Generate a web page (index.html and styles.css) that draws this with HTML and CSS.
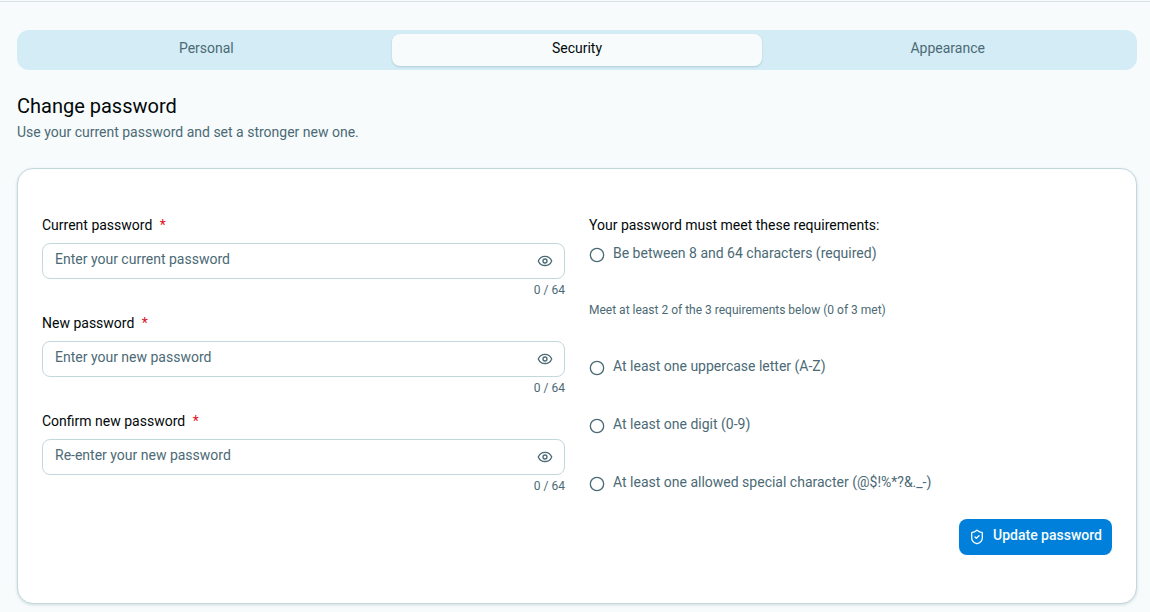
FILE: index.html
```html
<!DOCTYPE html>
<html lang="en">
<head>
  <meta charset="UTF-8" />
  <meta name="viewport" content="width=device-width, initial-scale=1.0"/>
  <title>Settings - Security</title>
  <link rel="stylesheet" href="styles.css">
</head>
<body>

  <main class="settings">

    <!-- Tabs -->
    <div class="tabs" role="tablist">
      <button type="button" class="tab" role="tab" aria-selected="false">Personal</button>
      <button type="button" class="tab active" role="tab" aria-selected="true">Security</button>
      <button type="button" class="tab" role="tab" aria-selected="false">Appearance</button>
    </div>

    <header class="heading">
      <h1>Change password</h1>
      <p>Use your current password and set a stronger new one.</p>
    </header>

    <form class="card">

      <!-- Password fields -->
      <div class="fields">
        <div class="field">
          <label for="currentPassword">Current password <span class="required">*</span></label>
          <div class="input-box">
            <input type="password" id="currentPassword" maxlength="64" placeholder="Enter your current password">
            <button type="button" class="toggle" aria-label="Show password">
              <svg viewBox="0 0 24 24"><path d="M2.1 12.3a1 1 0 0 1 0-.7 10.8 10.8 0 0 1 19.8 0 1 1 0 0 1 0 .7 10.8 10.8 0 0 1-19.8 0"/><circle cx="12" cy="12" r="3"/></svg>
            </button>
          </div>
          <span class="counter">0 / 64</span>
        </div>

        <div class="field">
          <label for="newPassword">New password <span class="required">*</span></label>
          <div class="input-box">
            <input type="password" id="newPassword" maxlength="64" placeholder="Enter your new password">
            <button type="button" class="toggle" aria-label="Show password">
              <svg viewBox="0 0 24 24"><path d="M2.1 12.3a1 1 0 0 1 0-.7 10.8 10.8 0 0 1 19.8 0 1 1 0 0 1 0 .7 10.8 10.8 0 0 1-19.8 0"/><circle cx="12" cy="12" r="3"/></svg>
            </button>
          </div>
          <span class="counter">0 / 64</span>
        </div>

        <div class="field">
          <label for="confirmPassword">Confirm new password <span class="required">*</span></label>
          <div class="input-box">
            <input type="password" id="confirmPassword" maxlength="64" placeholder="Re-enter your new password">
            <button type="button" class="toggle" aria-label="Show password">
              <svg viewBox="0 0 24 24"><path d="M2.1 12.3a1 1 0 0 1 0-.7 10.8 10.8 0 0 1 19.8 0 1 1 0 0 1 0 .7 10.8 10.8 0 0 1-19.8 0"/><circle cx="12" cy="12" r="3"/></svg>
            </button>
          </div>
          <span class="counter">0 / 64</span>
        </div>
      </div>

      <!-- Requirements -->
      <div class="rules">
        <h2>Your password must meet these requirements:</h2>
        <div class="rule">
          <svg viewBox="0 0 24 24"><circle cx="12" cy="12" r="10"/></svg>
          <span>Be between 8 and 64 characters (required)</span>
        </div>
        <p class="note">Meet at least 2 of the 3 requirements below (0 of 3 met)</p>
        <ul class="rule-list">
          <li class="rule">
            <svg viewBox="0 0 24 24"><circle cx="12" cy="12" r="10"/></svg>
            <span>At least one uppercase letter (A-Z)</span>
          </li>
          <li class="rule">
            <svg viewBox="0 0 24 24"><circle cx="12" cy="12" r="10"/></svg>
            <span>At least one digit (0-9)</span>
          </li>
          <li class="rule">
            <svg viewBox="0 0 24 24"><circle cx="12" cy="12" r="10"/></svg>
            <span>At least one allowed special character (@$!%*?&amp;._-)</span>
          </li>
        </ul>
      </div>

      <div class="actions">
        <button type="submit" class="submit">
          <svg viewBox="0 0 24 24"><path d="M20 13c0 5-3.500 7.500-7.660 8.950a1 1 0 0 1-.67-.01C7.500 20.500 4 18 4 13V6a1 1 0 0 1 1-1c2 0 4.500-1.200 6.240-2.720a1.170 1.170 0 0 1 1.520 0C14.510 3.810 17 5 19 5a1 1 0 0 1 1 1z"/><path d="m9 12 2 2 4-4"/></svg>
          <span>Update password</span>
        </button>
      </div>
    </form>

  </main>

</body>
</html>
```
FILE: styles.css
```css
* {
  box-sizing: border-box;
}
body {
  margin: 0;
  font-family: Roboto, sans-serif;
  font-size: 14px;
  line-height: 20px;
  color: #020809;
  background: #f7fbfc;
}
h1, h2, p, ul {
  margin: 0;
  padding: 0;
  font-weight: 400;
}
button, input {
  font: inherit;
}
button {
  border: none;
  cursor: pointer;
}
svg {
  flex: none;
  width: 16px;
  height: 16px;
  fill: none;
  stroke: currentColor;
  stroke-width: 2;
  stroke-linecap: round;
  stroke-linejoin: round;
}
.settings {
  margin-top: 1px;
  border-top: 1px solid #d9e3e6;
  padding: 28px 13px 8px 17px;
}

/* Tabs */
.tabs {
  display: flex;
  padding: 4px;
  border-radius: 12px;
  background: #d3ecf5;
}
.tab {
  flex: 1;
  height: 32px;
  padding: 0 12px 4px;
  border-radius: 8px;
  background: none;
  color: #4b6a75;
}
.tab.active {
  background: #f7fbfc;
  color: #020809;
  box-shadow: 0 1px 2px rgba(30, 80, 90, 0.2);
}

.heading {
  margin: 22px 0 26px;
  color: #4b6a75;
}
.heading h1 {
  font-size: 20px;
  line-height: 28px;
  color: #020809;
}
.heading p {
  margin-top: 2px;
}

.card {
  display: grid;
  grid-template-columns: 1fr 1fr;
  column-gap: 24px;
  padding: 46px 24px 48px;
  border: 1px solid #c3d8dc;
  border-radius: 16px;
  background: #fff;
  box-shadow: 0 1px 3px rgba(30, 80, 90, 0.18);
}

/* Password fields */
.fields {
  display: flex;
  flex-direction: column;
  gap: 14px;
}
.field {
  display: flex;
  flex-direction: column;
}
.required {
  margin-left: 4px;
  color: #e01020;
}
.input-box {
  display: flex;
  align-items: center;
  height: 36px;
  margin: 8px 0 2px;
  border: 1px solid #c3d8dc;
  border-radius: 8px;
  background: #fff;
}
.input-box input {
  flex: 1;
  min-width: 0;
  height: 100%;
  padding: 0 12px 4px;
  border: none;
  outline: none;
  background: none;
}
.input-box input::placeholder {
  color: #4b6a75;
  opacity: 1;
}
.toggle {
  display: flex;
  padding: 0 11px;
  background: none;
  color: #4b6a75;
}
.counter {
  align-self: flex-end;
  font-size: 12px;
  line-height: 18px;
  color: #4b6a75;
}

/* Requirements */
.rules {
  color: #4b6a75;
}
.rules h2 {
  margin-bottom: 8px;
  font-size: 14px;
  color: #020809;
}
.rule {
  display: flex;
  gap: 8px;
}
.rule svg {
  margin-top: 4px;
}
.note {
  margin: 37px 0 36px;
  font-size: 12px;
}
.rule-list {
  display: flex;
  flex-direction: column;
  gap: 38px;
  list-style: none;
}

.actions {
  grid-column: 1 / -1;
  display: flex;
  justify-content: flex-end;
  margin-top: 24px;
}
.submit {
  display: flex;
  align-items: center;
  gap: 8px;
  height: 36px;
  padding: 0 10px;
  border-radius: 8px;
  background: #0080da;
  color: #f7fbfc;
  font-weight: 500;
}
.submit span {
  padding-bottom: 4px;
}
```
